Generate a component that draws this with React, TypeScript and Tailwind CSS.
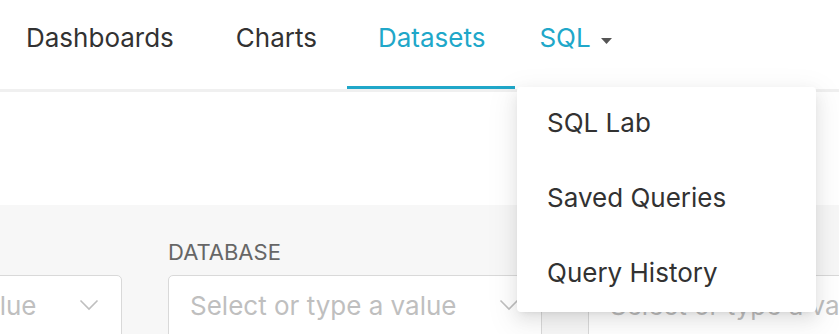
import { ReactNode } from 'react'

function NavItem({ label, active, pl, pr, children }: { label: string; active?: boolean; pl: string; pr: string; children?: ReactNode }) {
  return (
    <div
      className={`flex h-full items-start pt-[20px] ${pl} ${pr} ${active ? 'border-b-[3px] border-[#20a7c9] text-[#20a7c9]' : 'text-[#323232]'}`}
    >
      <span className="text-[26px] leading-[36px]">{label}</span>
      {children}
    </div>
  )
}

function Chevron() {
  return (
    <svg width="20" height="12" viewBox="0 0 20 12" className="shrink-0">
      <polyline points="1.5,1.5 10,10 18.5,1.5" fill="none" stroke="#bfbfbf" strokeWidth="1.6" />
    </svg>
  )
}

function Filter({ label }: { label: string }) {
  return (
    <div className="flex w-[374px] shrink-0 flex-col gap-[9px]">
      <div className="h-[28px] text-[22px] leading-[28px] text-[#666666]">{label}</div>
      <div className="flex h-[64px] items-center justify-between rounded-[5px] border border-[#d9d9d9] bg-white pb-[4px] pl-[21px] pr-[22px]">
        <span className="whitespace-nowrap text-[26px] text-[#bfbfbf]">Select or type a value</span>
        <Chevron />
      </div>
    </div>
  )
}

export default function App() {
  return (
    <div className="relative h-[334px] w-[839px] overflow-hidden bg-white font-['Inter',sans-serif]">
      <header className="flex h-[92px] border-b-[3px] border-[#f0f0f0]">
        <div className="-ml-[4px] flex h-[89px]">
          <NavItem label="Dashboards" pl="pl-[30px]" pr="pr-[30px]" />
          <NavItem label="Charts" pl="pl-[32px]" pr="pr-[30px]" />
          <NavItem label="Datasets" active pl="pl-[31px]" pr="pr-[30px]" />
          <div className="flex h-full items-start gap-[10px] pl-[24px] pt-[20px] text-[#20a7c9]">
            <span className="text-[26px] leading-[36px]">SQL</span>
            <svg width="11" height="6" viewBox="0 0 11 6" className="mt-[18px]">
              <path d="M0 0h11L5.5 6z" fill="#555555" />
            </svg>
          </div>
        </div>
      </header>

      <div className="h-[113px]" />

      <div className="h-[200px] bg-[#f7f7f7] pt-[33px]">
        <div className="-ml-[252px] flex gap-[46px]">
          <Filter label="OWNER" />
          <Filter label="DATABASE" />
          <Filter label="SCHEMA" />
        </div>
      </div>

      <div className="absolute left-[517px] top-[87px] flex w-[299px] flex-col rounded-[4px] bg-white shadow-[0_3px_6px_-4px_rgba(0,0,0,0.12),0_6px_16px_0_rgba(0,0,0,0.08),0_9px_28px_8px_rgba(0,0,0,0.05)]">
        {['SQL Lab', 'Saved Queries', 'Query History'].map((item) => (
          <div key={item} className="flex h-[75px] items-center px-[30px] pb-[4px] text-[26px] leading-[36px] text-[#323232]">
            {item}
          </div>
        ))}
      </div>
    </div>
  )
}
